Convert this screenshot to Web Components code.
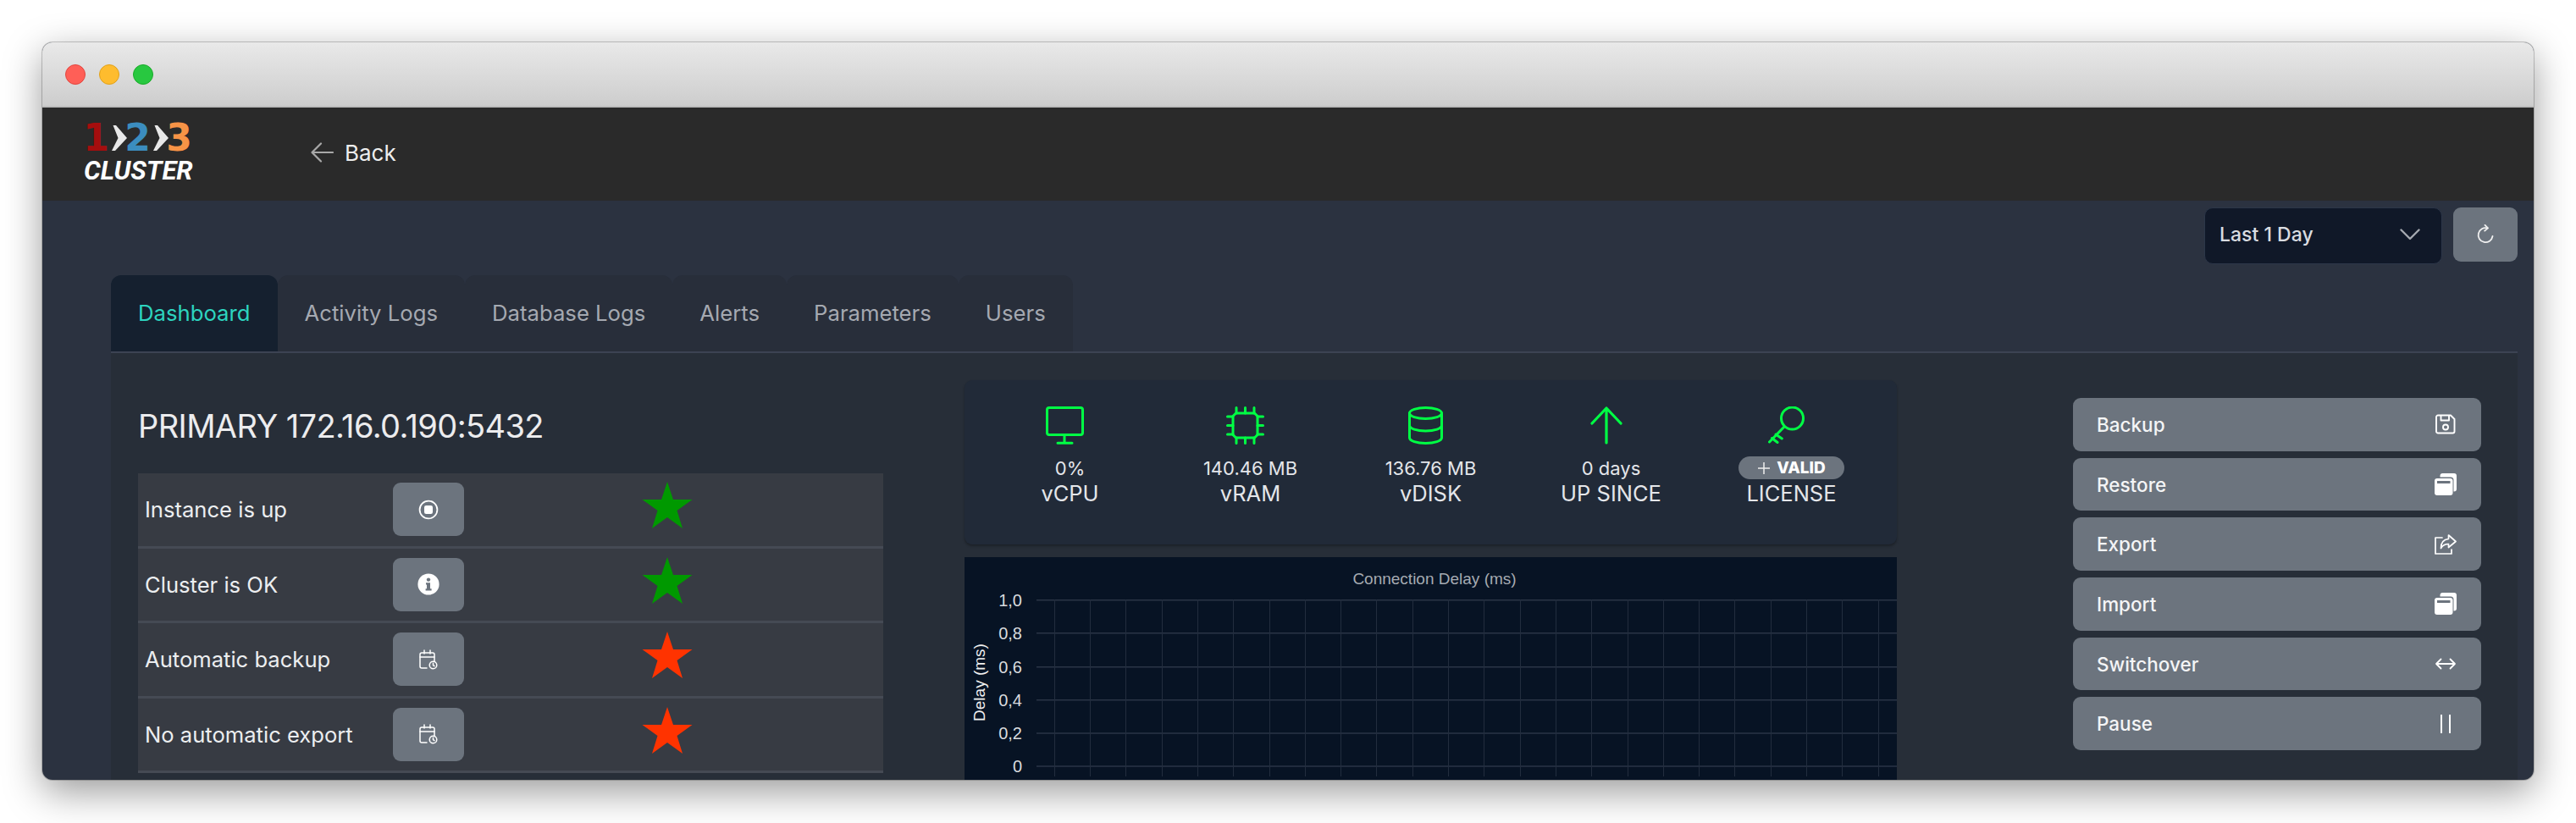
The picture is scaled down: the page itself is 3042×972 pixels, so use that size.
<!DOCTYPE html>
<html>
<head>
<meta charset="utf-8">
<title>Cluster dashboard</title>
<style>
  html, body { margin: 0; height: 972px; overflow: hidden; background: #fff; }
  body { font-family: Inter, "Liberation Sans", sans-serif; padding: 50px 50px 0; box-sizing: border-box; }
</style>
</head>
<body>
<cluster-window>
  <cluster-header></cluster-header>
  <cluster-toolbar></cluster-toolbar>
  <cluster-tabs>
    <tab-item active>Dashboard</tab-item>
    <tab-item>Activity Logs</tab-item>
    <tab-item>Database Logs</tab-item>
    <tab-item>Alerts</tab-item>
    <tab-item>Parameters</tab-item>
    <tab-item>Users</tab-item>
  </cluster-tabs>
  <cluster-content>
    <status-panel slot="left">
      <status-row icon="stop" color="#009900">Instance is up</status-row>
      <status-row icon="info" color="#009900">Cluster is OK</status-row>
      <status-row icon="cal" color="#ff3300">Automatic backup</status-row>
      <status-row icon="cal" color="#ff3300">No automatic export</status-row>
    </status-panel>
    <div slot="center">
      <metric-bar>
        <metric-item icon="monitor" value="0%" label="vCPU"></metric-item>
        <metric-item icon="chip" value="140.46 MB" label="vRAM"></metric-item>
        <metric-item icon="db" value="136.76 MB" label="vDISK"></metric-item>
        <metric-item icon="up" value="0 days" label="UP SINCE"></metric-item>
        <metric-item icon="key" badge="VALID" label="LICENSE"></metric-item>
      </metric-bar>
      <delay-chart></delay-chart>
    </div>
    <action-list slot="right">
      <action-button icon="save">Backup</action-button>
      <action-button icon="stack">Restore</action-button>
      <action-button icon="share">Export</action-button>
      <action-button icon="stack">Import</action-button>
      <action-button icon="swap">Switchover</action-button>
      <action-button icon="pause">Pause</action-button>
    </action-list>
  </cluster-content>
</cluster-window>

<script>
const ICONS = {
  stop: '<svg width="24" height="24" viewBox="0 0 24 24"><circle cx="12" cy="12" r="10.4" fill="none" stroke="#fff" stroke-width="1.8"/><rect x="7" y="7" width="10" height="10" rx="2.2" fill="#fff"/></svg>',
  info: '<svg width="26" height="26" viewBox="0 0 26 26"><circle cx="13" cy="13" r="12.6" fill="#fff"/><circle cx="13" cy="7.6" r="2.2" fill="#6c747e"/><path d="M10 11.2h5v7h1.6v2.2H9.6v-2.2H11v-4.8h-1z" fill="#6c747e"/></svg>',
  cal: '<svg width="22" height="24" viewBox="0 0 22 24" fill="none" stroke="#fff" stroke-width="1.5" stroke-linecap="round"><path d="M9 22H3a2 2 0 0 1-2-2V6a2 2 0 0 1 2-2h13a2 2 0 0 1 2 2v8"/><path d="M1 9h17M6 1v4M13 1v4"/><circle cx="16.5" cy="18.5" r="4.3"/><path d="M16.5 16.3v2.4l1.5 1"/></svg>',
  monitor: '<svg width="45" height="45" viewBox="0 0 45 45" fill="none" stroke="#00ff44" stroke-width="3" stroke-linecap="round" stroke-linejoin="round"><rect x="1.5" y="1.5" width="42" height="32" rx="2.5"/><path d="M22 34v9M14 43.3h17"/></svg>',
  chip: '<svg width="45" height="45" viewBox="0 0 45 45" fill="none" stroke="#00ff44" stroke-width="3" stroke-linecap="round" stroke-linejoin="round"><path d="M11.5 8h22l3.5 3.5v22L33.500 37h-22L8 33.500v-22z"/><path d="M12 1.500V8M22.500 1.500V8M33 1.500V8M12 37v6.500M22.500 37v6.500M33 37v6.500M1.500 12H8M1.500 22.500H8M1.500 33H8M37 12h6.500M37 22.500h6.500M37 33h6.500"/></svg>',
  db: '<svg width="41" height="45" viewBox="0 0 41 45" fill="none" stroke="#00ff44" stroke-width="3" stroke-linecap="round" stroke-linejoin="round"><ellipse cx="20.500" cy="8" rx="19" ry="6.500"/><path d="M1.500 8v29c0 3.600 8.500 6.500 19 6.500s19-2.900 19-6.500V8"/><path d="M1.500 22.500c0 3.600 8.500 6.500 19 6.500s19-2.900 19-6.500"/></svg>',
  up: '<svg width="38" height="45" viewBox="0 0 38 45" fill="none" stroke="#00ff44" stroke-width="3.200" stroke-linecap="round" stroke-linejoin="round"><path d="M19 43V2M2 20 19 2l17 18"/></svg>',
  key: '<svg width="43" height="45" viewBox="0 0 43 45" fill="none" stroke="#00ff44" stroke-width="3" stroke-linecap="round" stroke-linejoin="round"><circle cx="28.500" cy="14" r="13"/><path d="M19 24 1.500 42M9 33l7.300 5M4.500 37.500l6.500 5"/></svg>',
  save: '<svg width="24" height="24" viewBox="0 0 24 24" fill="none" stroke="#fff" stroke-width="1.900" stroke-linejoin="round"><path d="M3 1.500h15l4.500 4.500v14.500a2 2 0 0 1-2 2h-17.500a2 2 0 0 1-2-2v-17a2 2 0 0 1 2-2z"/><path d="M6.500 1.500v6h9.500v-6"/><circle cx="12" cy="15.500" r="3"/></svg>',
  stack: '<svg width="26" height="26" viewBox="0 0 26 26"><path d="M9.500 0h13.500a3 3 0 0 1 3 3v15.500a3 3 0 0 1-3 3h-.5V8a3.500 3.500 0 0 0-3.500-3.500H6.500V3a3 3 0 0 1 3-3z" fill="#fff"/><path d="M3 6h15.500a3 3 0 0 1 3 3v14a3 3 0 0 1-3 3H3a3 3 0 0 1-3-3V9a3 3 0 0 1 3-3z" fill="#fff"/><rect x="3" y="9" width="15.500" height="3" fill="#6c747e"/></svg>',
  share: '<svg width="26" height="24" viewBox="0 0 26 24" fill="none" stroke="#fff" stroke-width="1.700" stroke-linejoin="round" stroke-linecap="round"><path d="M9 4H1v19h19v-5"/><path d="M16.500 1 25 8.500 16.500 15.500v-4c-4.500 0-7 1.500-9 5 0-6.500 3.500-10.500 9-11z"/></svg>',
  swap: '<svg width="26" height="16" viewBox="0 0 26 16" fill="none" stroke="#fff" stroke-width="1.800" stroke-linecap="round" stroke-linejoin="round"><path d="M2 8h22M7.500 2.500 2 8l5.500 5.500M18.500 2.500 24 8l-5.500 5.500"/></svg>',
  pause: '<svg width="26" height="24" viewBox="0 0 26 24" fill="none" stroke="#fff" stroke-width="2"><path d="M8 1v22M18 1v22"/></svg>'
};

class ClusterWindow extends HTMLElement {
  connectedCallback() {
    this.attachShadow({ mode: 'open' });
    this.shadowRoot.innerHTML = `
      <style>
        :host {
          display: block;
          width: 2942px;
          height: 871px;
          border-radius: 12px;
          overflow: hidden;
          background: #2b3240;
          box-shadow: 0 0 0 1px rgba(0,0,0,.2), 0 14px 46px rgba(0,0,0,.4);
        }
        .titlebar {
          height: 75px;
          display: flex;
          align-items: center;
          gap: 16px;
          padding: 0 0 0 27px;
          background: linear-gradient(#e9e9e9, #cdcdcd);
          border-bottom: 2px solid #bdbdbd;
        }
        .dot { width: 24px; height: 24px; border-radius: 50%; box-sizing: border-box; }
        .r { background: #ff5f57; border: 1px solid #e2463f; }
        .y { background: #febc2e; border: 1px solid #e1a11a; }
        .g { background: #28c840; border: 1px solid #1aab29; }
      </style>
      <div class="titlebar"><span class="dot r"></span><span class="dot y"></span><span class="dot g"></span></div>
      <slot></slot>
    `;
  }
}

class ClusterHeader extends HTMLElement {
  connectedCallback() {
    this.attachShadow({ mode: 'open' });
    this.shadowRoot.innerHTML = `
      <style>
        :host { display: flex; align-items: center; height: 110px; background: #2a2a2a; padding-left: 49px; }
        .logo { width: 268px; margin-top: -2px; }
        .nums { display: flex; align-items: center; height: 34px; padding-left: 2.500px; font: 700 44px/34px "DejaVu Sans", sans-serif; }
        .nums span { display: flex; justify-content: center; width: 24px; }
        .nums svg { margin: 0 1px 0 6px; }
        .cl { font: italic 700 31px/30px Roboto, sans-serif; color: #fff; margin-top: 7px; }
        .back { display: flex; align-items: center; gap: 13px; color: #ededed; font-size: 26px; margin-top: -4px; }
      </style>
      <div class="logo">
        <div class="nums">
          <span style="color:#a50e0e">1</span>
          <svg width="18" height="32" viewBox="0 0 18 32"><path d="M1.500 1H5L18 16 4 31H0L7.500 16z" fill="#e8e8e8"/></svg>
          <span style="color:#3b8dbf">2</span>
          <svg width="18" height="32" viewBox="0 0 18 32"><path d="M1.500 1H5L18 16 4 31H0L7.500 16z" fill="#e8e8e8"/></svg>
          <span style="color:#f79346">3</span>
        </div>
        <div class="cl">CLUSTER</div>
      </div>
      <div class="back">
        <svg width="27" height="24" viewBox="0 0 27 24" fill="none" stroke="#a8a8a8" stroke-width="2.200" stroke-linecap="round" stroke-linejoin="round"><path d="M26 12H1.500M12 1.500 1.500 12 12 22.500"/></svg>
        <span>Back</span>
      </div>
    `;
  }
}

class ClusterToolbar extends HTMLElement {
  connectedCallback() {
    this.attachShadow({ mode: 'open' });
    this.shadowRoot.innerHTML = `
      <style>
        :host { display: flex; justify-content: flex-end; gap: 13px; padding: 8px 19px 13px 0; align-items: flex-start; }
        .select {
          width: 281px; height: 67px; box-sizing: border-box;
          display: flex; align-items: center; justify-content: space-between;
          padding: 0 25px 4px 17px;
          background: #101828; border: 1px solid #2c3648; border-radius: 10px;
          color: #d9dce1; font-size: 23px; font-weight: 500;
        }
        .refresh {
          width: 76px; height: 64px; border-radius: 9px; background: #6c747e;
          display: flex; align-items: center; justify-content: center;
        }
      </style>
      <div class="select"><span>Last 1 Day</span>
        <svg width="24" height="14" viewBox="0 0 24 14" fill="none" stroke="#a4a9b0" stroke-width="2.400" stroke-linecap="round" stroke-linejoin="round"><path d="M1.500 1.500 12 12 22.500 1.500"/></svg>
      </div>
      <div class="refresh">
        <svg width="20" height="24" viewBox="0 0 20 24" fill="none" stroke="#f0f0f0" stroke-width="1.800" stroke-linecap="round" stroke-linejoin="round"><path d="M12.500 4.500A8.500 8.500 0 1 0 18.500 14"/><path d="M9.500 .8l3.500 3.600-3.800 3.200"/></svg>
      </div>
    `;
  }
}

class ClusterTabs extends HTMLElement {
  connectedCallback() {
    this.attachShadow({ mode: 'open' });
    this.shadowRoot.innerHTML = `
      <style>
        :host {
          display: flex; margin: 0 19px 0 81px; height: 92px; box-sizing: border-box;
          border-bottom: 2px solid #3c4353;
        }
      </style>
      <slot></slot>
    `;
  }
}

class TabItem extends HTMLElement {
  connectedCallback() {
    this.attachShadow({ mode: 'open' });
    this.shadowRoot.innerHTML = `
      <style>
        :host {
          display: flex; align-items: center; height: 90px; box-sizing: border-box;
          padding: 0 32px 2px 32px;
          background: #282e3a; color: #a5a9b1; font-size: 25.700px;
          border-radius: 12px 12px 0 0;
        }
        :host([active]) { background: #15202f; color: #2dd4bf; }
      </style>
      <slot></slot>
    `;
  }
}

class ClusterContent extends HTMLElement {
  connectedCallback() {
    this.attachShadow({ mode: 'open' });
    this.shadowRoot.innerHTML = `
      <style>
        :host {
          display: grid;
          grid-template-columns: 880px 1101px 482px;
          column-gap: 96px;
          margin: 0 19px 0 81px;
          padding: 32px 0 0 32px;
          height: 600px;
          background: #272e38;
        }
        .col3 { margin-left: 112px; }
      </style>
      <slot name="left"></slot>
      <slot name="center"></slot>
      <div class="col3"><slot name="right"></slot></div>
    `;
  }
}

class StatusPanel extends HTMLElement {
  connectedCallback() {
    this.attachShadow({ mode: 'open' });
    this.shadowRoot.innerHTML = `
      <style>
        :host { display: block; }
        h2 { margin: 0 0 33px; padding-top: 31px; font-size: 38px; line-height: 46px; font-weight: 400; color: #ececee; letter-spacing: -.6px; }
        .table { background: #373b43; }
      </style>
      <h2>PRIMARY 172.16.0.190:5432</h2>
      <div class="table"><slot></slot></div>
    `;
  }
}

class StatusRow extends HTMLElement {
  connectedCallback() {
    const icon = ICONS[this.getAttribute('icon')];
    const color = this.getAttribute('color');
    this.attachShadow({ mode: 'open' });
    this.shadowRoot.innerHTML = `
      <style>
        :host {
          display: grid; grid-template-columns: 293px 84px 1fr; align-items: center;
          height: 88.500px; box-sizing: border-box; padding: 0 0 0 8px;
          border-bottom: 3px solid #454a54;
          color: #eceef0; font-size: 25.600px;
        }
        .btn { height: 63px; background: #6c747e; border-radius: 9px; display: flex; align-items: center; justify-content: center; }
        .star { margin-left: 210px; display: flex; margin-top: -9px; }
      </style>
      <span><slot></slot></span>
      <div class="btn">${icon}</div>
      <div class="star"><svg width="60" height="56" viewBox="0 0 60 56"><path d="M30 0 37 21H59.500L41.500 34 48 55 30 42 12 55 18.500 34 .5 21H23z" fill="${color}"/></svg></div>
    `;
  }
}

class MetricBar extends HTMLElement {
  connectedCallback() {
    this.attachShadow({ mode: 'open' });
    this.shadowRoot.innerHTML = `
      <style>
        :host {
          display: grid; grid-template-columns: repeat(5, 1fr);
          height: 194px; box-sizing: border-box; padding: 31px 18px 0;
          background: #212a38; border-radius: 9px;
          box-shadow: 0 2px 3px rgba(0,0,0,.3);
          margin-bottom: 15px;
        }
      </style>
      <slot></slot>
    `;
  }
}

class MetricItem extends HTMLElement {
  connectedCallback() {
    const value = this.getAttribute('value');
    const badge = this.getAttribute('badge');
    this.attachShadow({ mode: 'open' });
    this.shadowRoot.innerHTML = `
      <style>
        :host { display: flex; flex-direction: column; align-items: center; color: #e4e6ea; }
        .ic { height: 45px; margin-right: 12px; }
        .ic svg { display: block; }
        .val { margin-top: 14px; height: 28px; line-height: 28px; font-size: 22px; white-space: nowrap; }
        .lab { margin-top: 1px; line-height: 30px; font-size: 25.500px; white-space: nowrap; }
        .badge {
          display: flex; align-items: center; justify-content: center; gap: 7px;
          width: 125px; height: 27px;
          border-radius: 14px; background: #6c747e; color: #fff; font-size: 19px; font-weight: 800;
        }
      </style>
      <div class="ic">${ICONS[this.getAttribute('icon')]}</div>
      <div class="val">${badge ? `<span class="badge"><svg width="16" height="16" viewBox="0 0 16 16" stroke="#eee" stroke-width="1.500"><path d="M8 1v14M1 8h14"/></svg>${badge}</span>` : value}</div>
      <div class="lab">${this.getAttribute('label')}</div>
    `;
  }
}

class DelayChart extends HTMLElement {
  connectedCallback() {
    const ys = [50.7, 89.8, 129.8, 168.8, 207.9, 246.9];
    const labels = ['1,0', '0,8', '0,6', '0,4', '0,2', '0'];
    let lines = '';
    ys.forEach((y, i) => {
      lines += `<line x1="85" x2="1101" y1="${y}" y2="${y}" stroke="#2a3546" stroke-width="1.500"/>`;
      lines += `<text x="68" y="${y + 7}" text-anchor="end" class="tick">${labels[i]}</text>`;
    });
    for (let i = 0; i < 24; i++) {
      const x = Math.round(105.7 + i * 42.3) + .5;
      lines += `<line x1="${x}" x2="${x}" y1="50" y2="259" stroke="#222d3e"/>`;
    }
    this.attachShadow({ mode: 'open' });
    this.shadowRoot.innerHTML = `
      <style>
        :host { display: block; height: 264px; background: #071324; }
        svg { display: block; font-family: "Liberation Sans", sans-serif; }
        .tick { font-size: 20px; fill: #d9dbde; }
        .title { font-size: 19px; fill: #a6abb2; }
        .ylab { font-size: 19px; fill: #f0f0f0; }
      </style>
      <svg width="1101" height="264" viewBox="0 0 1101 264">
        <text x="555" y="32" text-anchor="middle" class="title">Connection Delay (ms)</text>
        <text transform="translate(24 148) rotate(-90)" text-anchor="middle" class="ylab">Delay (ms)</text>
        ${lines}
      </svg>
    `;
  }
}

class ActionList extends HTMLElement {
  connectedCallback() {
    this.attachShadow({ mode: 'open' });
    this.shadowRoot.innerHTML = `
      <style>
        :host { display: flex; flex-direction: column; gap: 8px; padding-top: 21px; width: 482px; }
      </style>
      <slot></slot>
    `;
  }
}

class ActionButton extends HTMLElement {
  connectedCallback() {
    this.attachShadow({ mode: 'open' });
    this.shadowRoot.innerHTML = `
      <style>
        :host {
          display: flex; align-items: center; justify-content: space-between;
          height: 62.700px; box-sizing: border-box; padding: 0 29px 0 28px;
          background: #6c747e; border-radius: 9px;
          color: #f4f5f6; font-size: 22.500px; font-weight: 500;
        }
        .ic { width: 26px; height: 26px; display: flex; align-items: center; justify-content: center; }
      </style>
      <span><slot></slot></span>
      <span class="ic">${ICONS[this.getAttribute('icon')]}</span>
    `;
  }
}

customElements.define('cluster-window', ClusterWindow);
customElements.define('cluster-header', ClusterHeader);
customElements.define('cluster-toolbar', ClusterToolbar);
customElements.define('cluster-tabs', ClusterTabs);
customElements.define('tab-item', TabItem);
customElements.define('cluster-content', ClusterContent);
customElements.define('status-panel', StatusPanel);
customElements.define('status-row', StatusRow);
customElements.define('metric-bar', MetricBar);
customElements.define('metric-item', MetricItem);
customElements.define('delay-chart', DelayChart);
customElements.define('action-list', ActionList);
customElements.define('action-button', ActionButton);
</script>
</body>
</html>
